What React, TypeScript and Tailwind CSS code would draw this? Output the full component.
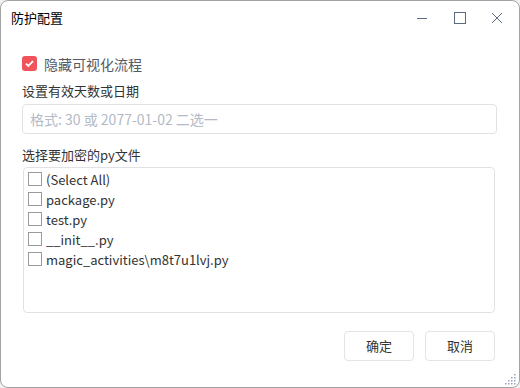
import React from "react";

const font = { fontFamily: '"Noto Sans CJK SC", "Noto Sans", sans-serif' };

function Box() {
  return <span className="w-[14px] h-[14px] border border-[#9a9a9a] bg-white shrink-0" />;
}

export default function App() {
  const files = ["(Select All)", "package.py", "test.py", "__init__.py", "magic_activities\\m8t7u1lvj.py"];
  return (
    <div className="w-[520px] h-[388px] bg-[#f0f0f0]" style={font}>
      <div className="relative w-full h-full bg-white border border-[#a3a3a3] rounded-[8px] flex flex-col overflow-hidden">
        <div className="h-[33px] flex items-center pl-[10px] shrink-0">
          <span className="text-[13px] text-black leading-none">防护配置</span>
          <div className="ml-auto flex items-center h-full">
            <div className="w-[38px] flex justify-center">
              <svg width="12" height="12" viewBox="0 0 12 12"><path d="M1 6.5h10" stroke="#5d6b80" strokeWidth="1" /></svg>
            </div>
            <div className="w-[38px] flex justify-center">
              <svg width="12" height="12" viewBox="0 0 12 12"><rect x="0.5" y="0.5" width="11" height="11" fill="none" stroke="#5d6b80" strokeWidth="1" /></svg>
            </div>
            <div className="w-[40px] flex justify-center pr-[4px]">
              <svg width="12" height="12" viewBox="0 0 12 12"><path d="M1 1l10 10M11 1L1 11" stroke="#5d6b80" strokeWidth="1" /></svg>
            </div>
          </div>
        </div>
        <div className="px-[21px] flex flex-col">
          <div className="flex items-center gap-[7px] mt-[22px]">
            <span className="w-[15px] h-[15px] rounded-[3px] bg-[#f1535a] flex items-center justify-center">
              <svg width="11" height="11" viewBox="0 0 11 11"><path d="M2 5.6l2.3 2.3L9 3.2" fill="none" stroke="white" strokeWidth="1.8" /></svg>
            </span>
            <span className="text-[14px] text-[#545a66] leading-none">隐藏可视化流程</span>
          </div>
          <div className="text-[13px] text-[#333] leading-none mt-[13px]">设置有效天数或日期</div>
          <div className="mt-[7px] h-[30px] mr-[1px] border border-[#e2e2e6] rounded-[4px] flex items-center pl-[7px]">
            <span className="text-[14px] text-[#b4bac6] leading-none">格式: 30 或 2077-01-02 二选一</span>
          </div>
          <div className="text-[13px] text-[#333] leading-none mt-[14px]">选择要加密的py文件</div>
          <div className="mt-[6px] h-[146px] mr-[3px] ml-[1px] border border-[#e2e2e6] rounded-[4px] pt-[1px] pl-[4px] flex flex-col">
            {files.map((f) => (
              <div key={f} className="h-[20px] flex items-center gap-[4px]">
                <Box />
                <span className="text-[13px] text-[#333] leading-none">{f}</span>
              </div>
            ))}
          </div>
          <div className="flex justify-end gap-[11px] mt-[18px] mr-[3px]">
            <button className="w-[70px] h-[30px] border border-[#e4e4e8] rounded-[4px] text-[13px] text-[#333] bg-white">确定</button>
            <button className="w-[70px] h-[30px] border border-[#e4e4e8] rounded-[4px] text-[13px] text-[#333] bg-white">取消</button>
          </div>
        </div>
        <svg className="absolute right-[2px] bottom-[2px]" width="12" height="12" viewBox="0 0 12 12">
          {[[10, 2], [10, 5], [7, 5], [10, 8], [7, 8], [4, 8], [10, 11], [7, 11], [4, 11], [1, 11]].map(([x, y], i) => (
            <rect key={i} x={x - 1} y={y - 1} width="1.5" height="1.5" fill="#9aa3bd" />
          ))}
        </svg>
      </div>
    </div>
  );
}
